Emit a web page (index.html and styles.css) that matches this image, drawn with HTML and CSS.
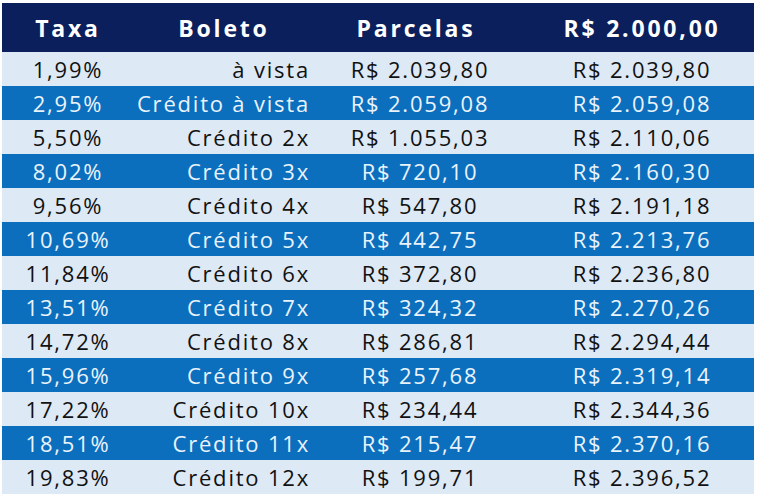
FILE: index.html
```html
<!DOCTYPE html>
<html lang="pt-BR">
<head>
<meta charset="utf-8">
<title>Taxas</title>
<link rel="stylesheet" href="styles.css">
</head>
<body>
<div class="table">
  <div class="row head">
    <div class="c1">Taxa</div><div class="c2">Boleto</div><div class="c3">Parcelas</div><div class="c4">R$ 2.000,00</div>
  </div>
  <div class="row light"><div class="c1">1,99%</div><div class="c2">à vista</div><div class="c3">R$ 2.039,80</div><div class="c4">R$ 2.039,80</div></div>
  <div class="row dark"><div class="c1">2,95%</div><div class="c2">Crédito à vista</div><div class="c3">R$ 2.059,08</div><div class="c4">R$ 2.059,08</div></div>
  <div class="row light"><div class="c1">5,50%</div><div class="c2">Crédito 2x</div><div class="c3">R$ 1.055,03</div><div class="c4">R$ 2.110,06</div></div>
  <div class="row dark"><div class="c1">8,02%</div><div class="c2">Crédito 3x</div><div class="c3">R$ 720,10</div><div class="c4">R$ 2.160,30</div></div>
  <div class="row light"><div class="c1">9,56%</div><div class="c2">Crédito 4x</div><div class="c3">R$ 547,80</div><div class="c4">R$ 2.191,18</div></div>
  <div class="row dark"><div class="c1">10,69%</div><div class="c2">Crédito 5x</div><div class="c3">R$ 442,75</div><div class="c4">R$ 2.213,76</div></div>
  <div class="row light"><div class="c1">11,84%</div><div class="c2">Crédito 6x</div><div class="c3">R$ 372,80</div><div class="c4">R$ 2.236,80</div></div>
  <div class="row dark"><div class="c1">13,51%</div><div class="c2">Crédito 7x</div><div class="c3">R$ 324,32</div><div class="c4">R$ 2.270,26</div></div>
  <div class="row light"><div class="c1">14,72%</div><div class="c2">Crédito 8x</div><div class="c3">R$ 286,81</div><div class="c4">R$ 2.294,44</div></div>
  <div class="row dark"><div class="c1">15,96%</div><div class="c2">Crédito 9x</div><div class="c3">R$ 257,68</div><div class="c4">R$ 2.319,14</div></div>
  <div class="row light"><div class="c1">17,22%</div><div class="c2">Crédito 10x</div><div class="c3">R$ 234,44</div><div class="c4">R$ 2.344,36</div></div>
  <div class="row dark"><div class="c1">18,51%</div><div class="c2">Crédito 11x</div><div class="c3">R$ 215,47</div><div class="c4">R$ 2.370,16</div></div>
  <div class="row light"><div class="c1">19,83%</div><div class="c2">Crédito 12x</div><div class="c3">R$ 199,71</div><div class="c4">R$ 2.396,52</div></div>
</div>
</body>
</html>
```
FILE: styles.css
```css
html, body {
  margin: 0;
  padding: 0;
  background: #ffffff;
}
body {
  padding: 3px 0 0 2px;
  font-family: "Open Sans", "Liberation Sans", sans-serif;
}
.table {
  width: 752px;
}
.row {
  display: grid;
  grid-template-columns: 132px 180px 216px 224px;
  height: 34px;
  align-items: center;
  font-size: 22px;
  letter-spacing: 1.8px;
  white-space: nowrap;
}
.head {
  height: 49px;
  background: #0b1f5c;
  color: #ffffff;
  font-weight: 700;
  font-size: 23px;
  letter-spacing: 2.8px;
}
.light {
  background: #dde9f5;
  color: #111111;
}
.dark {
  background: #0b6fbe;
  color: #eaf3fb;
}
.c1 { text-align: center; }
.c2 { text-align: right; padding-right: 4px; }
.c3 { text-align: center; padding-right: 4px; }
.c4 { text-align: center; }
.head .c2 { text-align: center; padding-right: 0; }
.head .c3 { padding-right: 12px; }
```
